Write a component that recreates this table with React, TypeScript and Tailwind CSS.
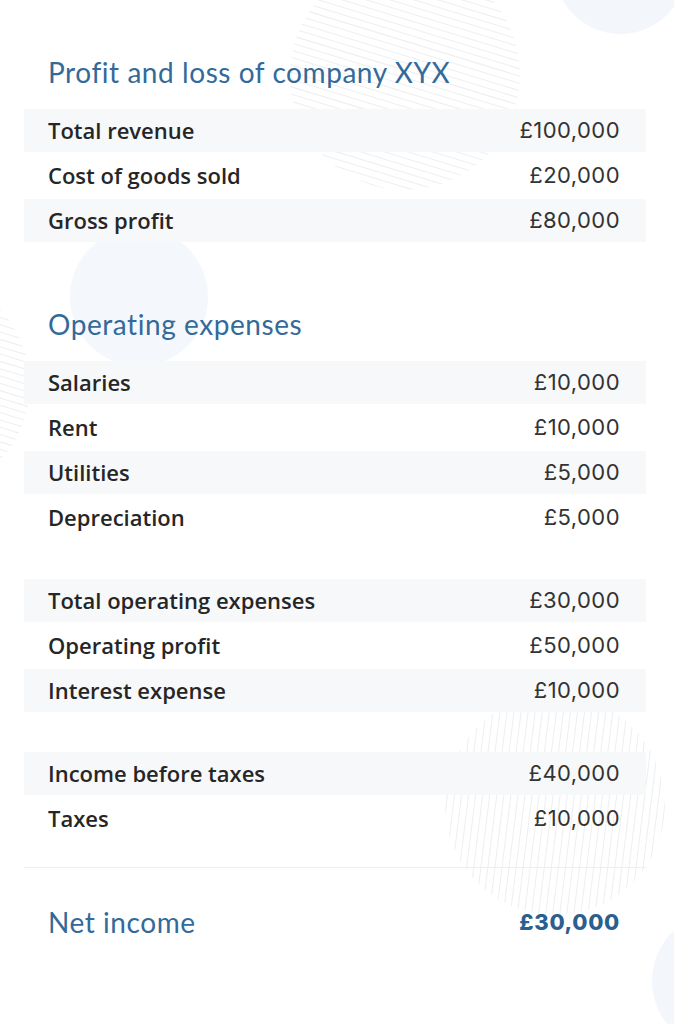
import React from 'react';

type Row = { label: string; value: string };

const sections: { title?: string; rows: Row[]; className: string }[] = [
  {
    title: 'Profit and loss of company XYX',
    className: 'pt-[56px]',
    rows: [
      { label: 'Total revenue', value: '£100,000' },
      { label: 'Cost of goods sold', value: '£20,000' },
      { label: 'Gross profit', value: '£80,000' },
    ],
  },
  {
    title: 'Operating expenses',
    className: 'pt-[66px]',
    rows: [
      { label: 'Salaries', value: '£10,000' },
      { label: 'Rent', value: '£10,000' },
      { label: 'Utilities', value: '£5,000' },
      { label: 'Depreciation', value: '£5,000' },
    ],
  },
  {
    className: 'pt-[40px]',
    rows: [
      { label: 'Total operating expenses', value: '£30,000' },
      { label: 'Operating profit', value: '£50,000' },
      { label: 'Interest expense', value: '£10,000' },
    ],
  },
  {
    className: 'pt-[40px]',
    rows: [
      { label: 'Income before taxes', value: '£40,000' },
      { label: 'Taxes', value: '£10,000' },
    ],
  },
];

// hatched circle used for the faint background texture
const Hatch = ({ r, angle, className }: { r: number; angle: number; className: string }) => {
  const id = `h${r}${angle}`;
  const lines = [];
  for (let i = -r * 1.5; i <= r * 1.5; i += 7) {
    lines.push(<line key={i} x1={-r * 1.5} y1={i} x2={r * 1.5} y2={i} />);
  }
  return (
    <svg width={r * 2} height={r * 2} viewBox={`${-r} ${-r} ${r * 2} ${r * 2}`} className={className}>
      <defs>
        <clipPath id={id}>
          <circle cx={0} cy={0} r={r} />
        </clipPath>
      </defs>
      <g clipPath={`url(#${id})`} stroke="#eceef0" strokeWidth={1}>
        <g transform={`rotate(${angle})`}>{lines}</g>
      </g>
    </svg>
  );
};

export default function App() {
  return (
    <div className="relative w-[674px] h-[1024px] overflow-hidden bg-white font-['Open_Sans',sans-serif]">
      {/* Background decoration */}
      <div className="absolute inset-0 pointer-events-none">
        <div className="absolute left-[554px] top-[-99px] w-[133px] h-[133px] rounded-full bg-[#f3f7fb]" />
        <div className="absolute left-[70px] top-[228px] w-[138px] h-[138px] rounded-full bg-[#f4f8fc]" />
        <div className="absolute left-[652px] top-[912px] w-[138px] h-[138px] rounded-full bg-[#f3f7fb]" />
        <Hatch r={115} angle={17} className="absolute left-[290px] top-[-40px]" />
        <Hatch r={110} angle={17} className="absolute left-[-190px] top-[275px]" />
        <Hatch r={110} angle={97} className="absolute left-[445px] top-[695px]" />
      </div>

      <div className="relative pl-6 pr-[28px]">
        {sections.map((s, si) => (
          <div key={si} className={s.className}>
            {s.title && (
              <h2 className="pl-6 mb-[21px] h-[32px] leading-[32px] text-[28px] tracking-[0.02em] font-['Lato',sans-serif] text-[#336a9a] font-normal">
                {s.title}
              </h2>
            )}
            <div className="flex flex-col gap-[2px]">
              {s.rows.map((r, i) => (
                <div
                  key={r.label}
                  className={`flex items-center justify-between h-[43px] pl-6 pr-[26px] ${i % 2 === 0 ? 'bg-[#f7f8fa]' : ''}`}
                >
                  <span className="text-[22px] font-semibold text-[#262626]">{r.label}</span>
                  <span className="text-[22px] tracking-[0.02em] font-['Inter',sans-serif] text-[#333333]">{r.value}</span>
                </div>
              ))}
            </div>
          </div>
        ))}

        <div className="mt-[27px] border-t border-[#eeeeee]" />

        <div className="mt-[38px] flex items-center justify-between h-[32px] pl-6 pr-[26px]">
          <span className="text-[28px] tracking-[0.02em] font-['Lato',sans-serif] text-[#336a9a]">Net income</span>
          <span className="text-[22px] tracking-[0.03em] font-extrabold font-['Inter',sans-serif] text-[#2b5f8f]">£30,000</span>
        </div>
      </div>
    </div>
  );
}
